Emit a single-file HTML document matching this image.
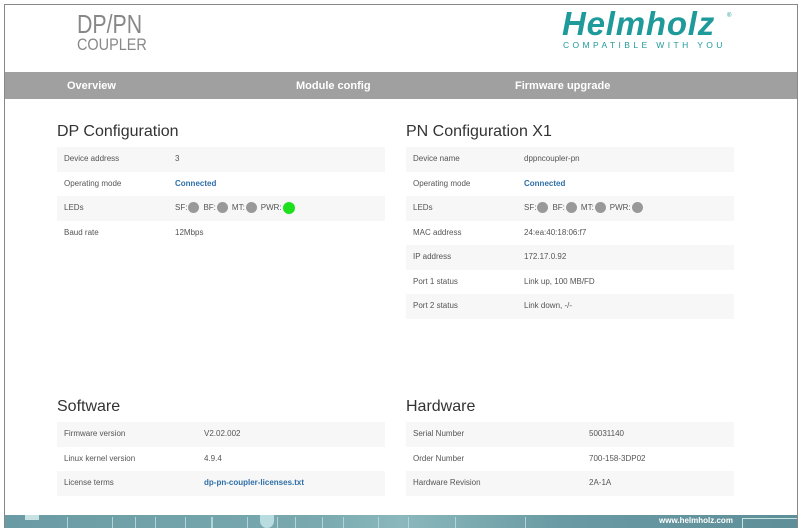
<!DOCTYPE html>
<html><head><meta charset="utf-8"><style>
*{margin:0;padding:0;box-sizing:border-box}
body{width:803px;height:531px;background:#fff;font-family:"Liberation Sans",sans-serif;position:relative;overflow:hidden;color:#444}
.frame{position:absolute;left:4px;top:4px;width:794px;height:524px;border:1px solid #888;border-bottom:none}
.a{position:absolute}
.nav{left:5px;top:72px;width:792px;height:27px;background:#a0a0a0}
.nav span{position:absolute;top:8px;color:#fff;font-size:11px;font-weight:bold}
h2{position:absolute;font-weight:normal;font-size:16px;color:#333}
.t{position:absolute;width:328px;font-size:8px;color:#555}
.r{height:24.5px;line-height:24.5px;padding-left:7px;position:relative}
.r:nth-child(odd){background:#f7f7f7}
.r b{font-weight:normal;position:absolute}
.blue{color:#2f6fa8!important;font-weight:bold!important}
.led{display:inline-block;width:11px;height:11px;border-radius:50%;background:#999;vertical-align:middle;margin:0 4px 0 1px}
.foot{left:5px;top:515px;width:792px;height:13px;background:linear-gradient(90deg,#6a9aa3,#7aaab0 40%,#8ab8bc 50%,#6a9aa3 70%,#5e8f99)}
.foot i{position:absolute;top:2px;width:1px;height:11px;background:#b0d4d8}
</style></head><body>
<div class="frame"></div>
<div class="a" style="left:77px;top:13px;color:#888;font-size:26px;line-height:22px;transform:scaleX(0.82);transform-origin:0 0">DP/PN</div>
<div class="a" style="left:77px;top:37px;color:#888;font-size:17px;line-height:16px;transform:scaleX(0.85);transform-origin:0 0">COUPLER</div>
<div class="a" style="left:562px;top:5px;color:#1f9a9a;font-size:33px;font-weight:bold;font-style:italic;letter-spacing:0.8px">Helmholz</div>
<div class="a" style="left:727px;top:13px;color:#1f9a9a;font-size:6px">®</div>
<div class="a" style="left:563px;top:40px;color:#1f9a9a;font-size:8.5px;letter-spacing:3.4px">COMPATIBLE WITH YOU</div>
<div class="a nav"><span style="left:62px">Overview</span><span style="left:291px">Module config</span><span style="left:510px">Firmware upgrade</span></div>

<h2 style="left:57px;top:123px">DP Configuration</h2>
<div class="t" style="left:57px;top:147px">
<div class="r">Device address<b style="left:118px">3</b></div>
<div class="r">Operating mode<b class="blue" style="left:118px">Connected</b></div>
<div class="r">LEDs<b style="left:118px">SF:<span class="led"></span>BF:<span class="led"></span>MT:<span class="led"></span>PWR:<span class="led" style="background:#1de01d;width:12px;height:12px"></span></b></div>
<div class="r">Baud rate<b style="left:118px">12Mbps</b></div>
</div>

<h2 style="left:406px;top:123px">PN Configuration X1</h2>
<div class="t" style="left:406px;top:147px">
<div class="r">Device name<b style="left:118px">dppncoupler-pn</b></div>
<div class="r">Operating mode<b class="blue" style="left:118px">Connected</b></div>
<div class="r">LEDs<b style="left:118px">SF:<span class="led"></span>BF:<span class="led"></span>MT:<span class="led"></span>PWR:<span class="led"></span></b></div>
<div class="r">MAC address<b style="left:118px">24:ea:40:18:06:f7</b></div>
<div class="r">IP address<b style="left:118px">172.17.0.92</b></div>
<div class="r">Port 1 status<b style="left:118px">Link up, 100 MB/FD</b></div>
<div class="r">Port 2 status<b style="left:118px">Link down, -/-</b></div>
</div>

<h2 style="left:57px;top:398px">Software</h2>
<div class="t" style="left:57px;top:422px">
<div class="r">Firmware version<b style="left:147px">V2.02.002</b></div>
<div class="r">Linux kernel version<b style="left:147px">4.9.4</b></div>
<div class="r">License terms<b class="blue" style="left:147px">dp-pn-coupler-licenses.txt</b></div>
</div>

<h2 style="left:406px;top:398px">Hardware</h2>
<div class="t" style="left:406px;top:422px">
<div class="r">Serial Number<b style="left:183px">50031140</b></div>
<div class="r">Order Number<b style="left:183px">700-158-3DP02</b></div>
<div class="r">Hardware Revision<b style="left:183px">2A-1A</b></div>
</div>

<div class="a foot">
<i style="left:62px"></i><i style="left:107px"></i><i style="left:130px"></i><i style="left:150px"></i><i style="left:180px"></i><i style="left:206px;width:2px"></i><i style="left:242px"></i><i style="left:272px"></i><i style="left:290px"></i><i style="left:317px"></i><i style="left:338px"></i><i style="left:373px"></i><i style="left:403px"></i><i style="left:450px"></i><i style="left:520px"></i>
<div class="a" style="left:20px;top:0;width:14px;height:5px;background:#c8e2e4"></div>
<div class="a" style="left:255px;top:0;width:14px;height:13px;border-radius:0 0 7px 7px;background:#b8dcdf"></div>
<span class="a" style="left:654px;top:1px;color:#fff;font-size:8px;font-weight:bold">www.helmholz.com</span>
<div class="a" style="left:737px;top:3px;width:55px;height:10px;border-top:1px solid #c8e2e4;border-left:1px solid #c8e2e4"></div>
</div>
</body></html>
